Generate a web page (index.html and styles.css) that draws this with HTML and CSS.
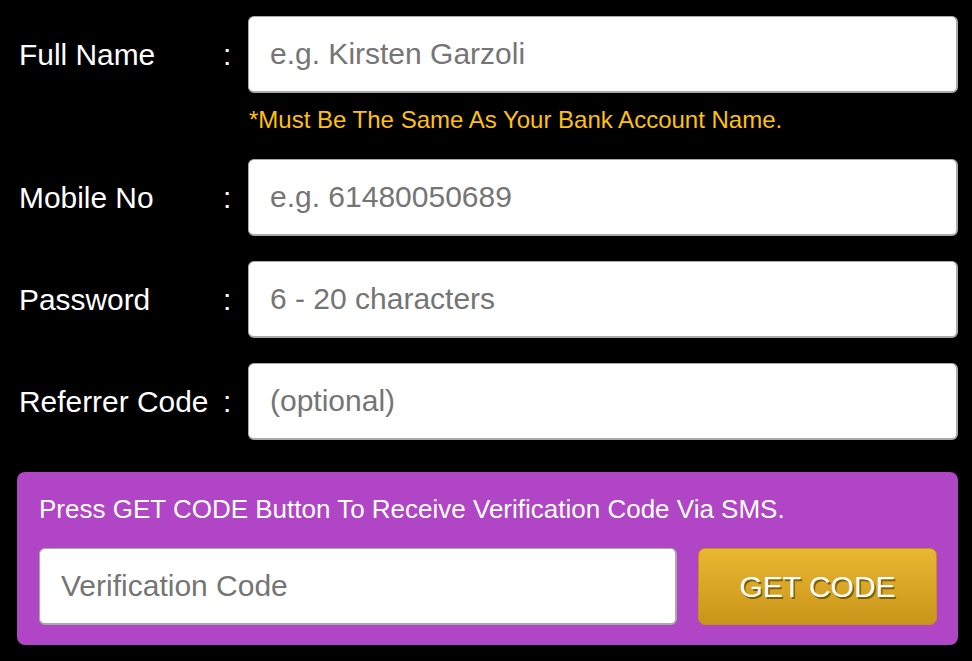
FILE: index.html
```html
<!DOCTYPE html>
<html lang="en">
<head>
<meta charset="utf-8">
<title>Register</title>
<link rel="stylesheet" href="styles.css">
</head>
<body>
<form class="form">
  <div class="row">
    <label class="label" for="fn">Full Name</label>
    <span class="colon">:</span>
    <div class="field">
      <input class="input" id="fn" type="text" placeholder="e.g. Kirsten Garzoli">
      <p class="note">*Must Be The Same As Your Bank Account Name.</p>
    </div>
  </div>
  <div class="row">
    <label class="label" for="mn">Mobile No</label>
    <span class="colon">:</span>
    <div class="field">
      <input class="input" id="mn" type="text" placeholder="e.g. 61480050689">
    </div>
  </div>
  <div class="row">
    <label class="label" for="pw">Password</label>
    <span class="colon">:</span>
    <div class="field">
      <input class="input" id="pw" type="password" placeholder="6 - 20 characters">
    </div>
  </div>
  <div class="row">
    <label class="label" for="rc">Referrer Code</label>
    <span class="colon">:</span>
    <div class="field">
      <input class="input" id="rc" type="text" placeholder="(optional)">
    </div>
  </div>
  <div class="verify">
    <p class="verify-text">Press GET CODE Button To Receive Verification Code Via SMS.</p>
    <div class="verify-row">
      <input class="input verify-input" type="text" placeholder="Verification Code">
      <button class="btn" type="button">GET CODE</button>
    </div>
  </div>
</form>
</body>
</html>
```
FILE: styles.css
```css
html, body {
  margin: 0;
  padding: 0;
  background: #000;
}
body {
  font-family: "Liberation Sans", Arial, Helvetica, sans-serif;
  color: #fff;
}
.form {
  padding: 16px 14px 0 17px;
  display: flex;
  flex-direction: column;
  gap: 25px;
}
.row {
  display: grid;
  grid-template-columns: 207px 24px 1fr;
  align-items: start;
}
.label {
  padding-left: 2px;
  font-size: 29.9px;
  height: 77px;
  line-height: 77px;
  white-space: nowrap;
}
.colon {
  font-size: 29.9px;
  height: 77px;
  line-height: 77px;
  margin-left: -1px;
}
.field {
  display: flex;
  flex-direction: column;
}
.input {
  box-sizing: border-box;
  width: 100%;
  height: 77px;
  margin: 0;
  padding: 0 0 0 21px;
  border: 1px solid #a9a9a9;
  border-bottom-width: 2px;
  border-right-width: 2px;
  border-radius: 6px;
  background: #fff;
  font-family: "Liberation Sans", Arial, Helvetica, sans-serif;
  font-size: 30px;
  color: #333;
  outline: none;
}
.input::placeholder {
  color: #757575;
  opacity: 1;
}
.note {
  margin: 13px 0 0 1px;
  font-size: 24px;
  line-height: 28px;
  color: #ffc10e;
}
.verify {
  margin-top: 7px;
  background: #b045c5;
  border-radius: 8px;
  padding: 22px 21px 20px 22px;
}
.verify-text {
  margin: 0;
  font-size: 26px;
  line-height: 30px;
  color: #fff;
}
.verify-row {
  margin-top: 24px;
  display: flex;
  gap: 21px;
}
.verify-input {
  flex: 1;
}
.btn {
  box-sizing: border-box;
  width: 239px;
  height: 77px;
  margin: 0;
  border: 1px solid #c2911c;
  border-radius: 7px;
  background: linear-gradient(to bottom, #eab731, #c9951a);
  font-family: "Liberation Sans", Arial, Helvetica, sans-serif;
  font-size: 30px;
  color: #fff;
  text-shadow: 1.5px 1.5px 0 #7d5d0c;
  cursor: pointer;
}
```
